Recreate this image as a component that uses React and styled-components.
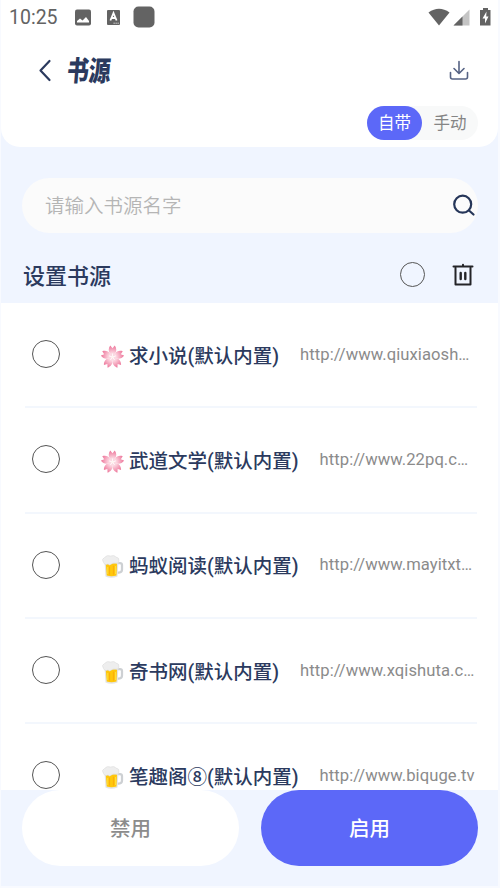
import React from 'react';
import styled, { createGlobalStyle } from 'styled-components';

const GlobalStyle = createGlobalStyle`
    * {
        box-sizing: border-box;
    }
    body {
        margin: 0;
        background: #fff;
        font-family: Roboto, 'Noto Sans CJK SC', sans-serif;
    }
`;

const Screen = styled.div`
    width: 500px;
    height: 888px;
    display: flex;
    flex-direction: column;
    overflow: hidden;
    background: #f0f5ff;
    border: solid #f8faff;
    border-width: 0 2px 2px 1px;
`;

const Header = styled.header`
    flex: none;
    height: 147px;
    background: #fff;
    border-radius: 0 0 19px 19px;
`;

const StatusBar = styled.div`
    height: 33px;
    padding: 0 6px 0 8px;
    display: flex;
    align-items: center;
    color: #636363;
`;

const Clock = styled.span`
    width: 65px;
    font-size: 19.5px;
    line-height: 33px;
    padding-top: 2px;
`;

const StatusIcons = styled.div`
    display: flex;
    align-items: center;
    margin-left: ${({ right }) => right ? 'auto' : '0'};
`;

const TitleRow = styled.div`
    height: 74px;
    padding: 0 29px 0 35px;
    display: flex;
    align-items: center;
`;

const Title = styled.h1`
    flex: 1;
    margin: 3px 0 0 13px;
    font-size: 27px;
    line-height: 40px;
    font-weight: 900;
    color: #2b3a5e;
    transform: scale(0.81, 1.04) skewX(-6deg);
    transform-origin: 0 50%;
`;

const Toggle = styled.div`
    width: 111px;
    height: 34px;
    margin: -1px 20px 0 auto;
    display: flex;
    border-radius: 17px;
    background: #f8f9f9;
`;

const ToggleItem = styled.button`
    flex: none;
    width: ${({ active }) => active ? '55px' : '56px'};
    height: 34px;
    padding: 2px 0 0;
    border: 0;
    border-radius: 17px;
    font: 400 16.5px/32px Roboto, 'Noto Sans CJK SC', sans-serif;
    background: ${({ active }) => active ? '#5c68f8' : 'transparent'};
    color: ${({ active }) => active ? '#fff' : '#858585'};
`;

const Search = styled.div`
    flex: none;
    height: 55px;
    margin: 31px 20px 0 21px;
    padding: 0 3px 2px 23px;
    display: flex;
    align-items: center;
    justify-content: space-between;
    border-radius: 28px;
    background: #fbfbfb;
    color: #b5b5b5;
    font-size: 19.5px;
    font-weight: 350;
`;

const Section = styled.div`
    flex: none;
    height: 70px;
    padding: 13px 24px 0 22px;
    display: flex;
    align-items: center;
`;

const SectionTitle = styled.h2`
    flex: 1;
    margin: 4px 0 0;
    font-size: 22px;
    line-height: 34px;
    font-weight: 500;
    color: #2b3a5e;
`;

const Radio = styled.span`
    flex: none;
    width: ${({ size }) => size}px;
    height: ${({ size }) => size}px;
    margin-right: ${({ gap }) => gap}px;
    border: 1.3px solid #555;
    border-radius: 50%;
`;

const List = styled.main`
    flex: none;
    height: 487px;
    margin: 0 -2px 0 -1px;
    padding: 0 23px 0 25px;
    overflow: hidden;
    background: #fff;
`;

const Row = styled.div`
    height: 105.3px;
    padding: 0 0 1px 7px;
    display: flex;
    align-items: center;
    border-bottom: 2px solid #f3f7fd;
`;

const Name = styled.span`
    flex: none;
    margin: 5px 21px 0 5px;
    font-size: 19.5px;
    line-height: 30px;
    font-weight: 500;
    color: #2b3a5e;
`;

const Url = styled.span`
    flex: none;
    margin-top: 1px;
    font-size: 16.6px;
    line-height: 24px;
    letter-spacing: 0.06px;
    white-space: nowrap;
    color: #8b8b8b;
`;

const Footer = styled.footer`
    flex: none;
    display: flex;
    justify-content: space-between;
    margin: 0 20px 0 21px;
`;

const Action = styled.button`
    width: 217px;
    height: 76px;
    padding: 1px 0 0;
    border: 0;
    border-radius: 38px;
    font: 500 20.5px/30px Roboto, 'Noto Sans CJK SC', sans-serif;
    background: ${({ primary }) => primary ? '#5c68f8' : '#fff'};
    color: ${({ primary }) => primary ? '#fff' : '#8c8c8c'};
`;

const Flower = () => (
    <svg width="23" height="23" viewBox="0 0 46 46">
        <defs>
            <radialGradient id="petal" gradientUnits="userSpaceOnUse" cx="23" cy="24" r="22">
                <stop offset="0" stopColor="#fff6f8" />
                <stop offset="0.4" stopColor="#fbd0dc" />
                <stop offset="1" stopColor="#ee7c9f" />
            </radialGradient>
        </defs>
        {[0, 72, 144, 216, 288].map((a) => (
            <path
                key={a}
                transform={`rotate(${a} 23 24)`}
                d="M23 24 L18 17 C14.500 13 14.500 6 18.500 1 L23 6.500 L27.500 1 C31.500 6 31.500 13 28 17Z"
                fill="url(#petal)"
            />
        ))}
        <circle cx="23" cy="24" r="7" fill="#fbd9e2" />
        {[0, 72, 144, 216, 288].map((a) => (
            <path key={a} transform={`rotate(${a} 23 24)`} d="M23 23V17" stroke="#fff" strokeWidth="1.600" />
        ))}
        <circle cx="23" cy="24" r="2.500" fill="#fff6f2" />
    </svg>
);

const Beer = () => (
    <svg width="23" height="23" viewBox="0 0 46 46">
        <path d="M33 16h5q4 0 4 4v9q0 6-6 6h-3" fill="none" stroke="#cdd0d3" strokeWidth="4.500" />
        <path d="M7 12 9 43Q20 48 33 43L35 12Z" fill="#e3e4e4" />
        <path d="M9.500 17 11.500 41Q21 44 31 41L32 17Z" fill="#ffc70c" />
        <path d="M17 24v14M25 22v16" stroke="#fbb00a" strokeWidth="2.500" strokeLinecap="round" />
        <path d="M13.500 24v14M29 22v16" stroke="#ffdf3a" strokeWidth="2" />
        <path d="M5 15Q0 8 7 5Q12 -1 19 2Q27 -1 30 4Q37 5 36 12Q35 18 29 16Q24 15 21 18Q17 22 14 18Q7 21 5 15Z" fill="#eeeeee" stroke="#d8d8d8" strokeWidth="1" />
    </svg>
);

const EmojiBox = styled.span`
    display: flex;
    flex: none;
    margin-top: 4px;
`;

const sources = [
    { icon: 'flower', name: '求小说(默认内置)', url: 'http://www.qiuxiaosh…' },
    { icon: 'flower', name: '武道文学(默认内置)', url: 'http://www.22pq.c…' },
    { icon: 'beer', name: '蚂蚁阅读(默认内置)', url: 'http://www.mayitxt…' },
    { icon: 'beer', name: '奇书网(默认内置)', url: 'http://www.xqishuta.c…' },
    { icon: 'beer', name: '笔趣阁⑧(默认内置)', url: 'http://www.biquge.tv' },
];

class App extends React.Component {
    render() {
        return (
            <Screen>
                <GlobalStyle />
                <Header>
                    <StatusBar>
                        <Clock>10:25</Clock>
                        <StatusIcons>
                            <svg width="82" height="24" viewBox="0 0 82 24" fill="#636363">
                                <rect x="1" y="4.500" width="16" height="16" rx="2" />
                                <path d="M3 17.500V16L6 13.500 8.500 15.500 12 12 15 16V17.500Z" fill="#fff" />
                                <rect x="33" y="5" width="13" height="15" rx="1" />
                                <path d="M36.400 15.500 39.500 8l3.100 7.500M37.800 13h3.500" fill="none" stroke="#fff" strokeWidth="1.800" />
                                <path d="M39.500 18.200h6" stroke="#ddd" strokeWidth="1" strokeDasharray="1.3 .7" />
                                <rect x="59.500" y="1.500" width="21" height="21" rx="5" />
                            </svg>
                        </StatusIcons>
                        <StatusIcons right>
                            <svg width="64" height="20" viewBox="0 0 64 20" fill="#636363">
                                <path d="M.5 5.500Q11 -2 21.500 5.500L11 18.500Z" />
                                <path d="M25.500 18.500 41.500 2.500V18.500Z" fill="#c4c4c4" />
                                <path d="M25.500 18.500 34.500 9.500V18.500Z" />
                                <path d="M52 3H55V1H60V3H62.500V18.500H52Z" />
                                <path d="M58.500 4.500 54.500 11.500H57V16.500L60.500 9.500H58.200Z" fill="#fff" />
                            </svg>
                        </StatusIcons>
                    </StatusBar>
                    <TitleRow>
                        <svg width="18" height="24" viewBox="0 0 18 24" fill="none" stroke="#2b3a5e" strokeWidth="2.200" strokeLinecap="round" strokeLinejoin="round">
                            <path d="M13.500 3 4.500 12.500 13.500 22" />
                        </svg>
                        <Title>书源</Title>
                        <svg width="20" height="20" viewBox="0 0 20 20" fill="none" stroke="#566384" strokeWidth="1.600" strokeLinecap="round" strokeLinejoin="round">
                            <path d="M10 1.500V13M5 8.500 10 13.500 15 8.500M1.500 12.500V17Q1.500 19 3.500 19H16.500Q18.500 19 18.500 17V12.500" />
                        </svg>
                    </TitleRow>
                    <Toggle>
                        <ToggleItem active>自带</ToggleItem>
                        <ToggleItem>手动</ToggleItem>
                    </Toggle>
                </Header>
                <Search>
                    <span>请输入书源名字</span>
                    <svg width="22" height="22" viewBox="0 0 22 22" fill="none" stroke="#263659" strokeWidth="2.200" strokeLinecap="round">
                        <circle cx="9.700" cy="10.200" r="8.500" />
                        <path d="M16 16.500 20.500 20.500" />
                    </svg>
                </Search>
                <Section>
                    <SectionTitle>设置书源</SectionTitle>
                    <Radio size={25} gap={27} />
                    <svg width="22" height="24" viewBox="0 0 22 24" fill="none" stroke="#242428" strokeWidth="2" strokeLinecap="round" strokeLinejoin="round">
                        <path d="M1.500 3.500H20.500M11 1.800V3M3.500 5V21.500H18.500V5" />
                        <path d="M8.700 10V16M13.300 10V16" strokeWidth="2.400" />
                    </svg>
                </Section>
                <List>
                    {sources.map((s) => (
                        <Row key={s.name}>
                            <Radio size={28} gap={41} />
                            <EmojiBox>{s.icon === 'flower' ? <Flower /> : <Beer />}</EmojiBox>
                            <Name>{s.name}</Name>
                            <Url>{s.url}</Url>
                        </Row>
                    ))}
                </List>
                <Footer>
                    <Action>禁用</Action>
                    <Action primary>启用</Action>
                </Footer>
            </Screen>
        )
    }
}

export default App;
